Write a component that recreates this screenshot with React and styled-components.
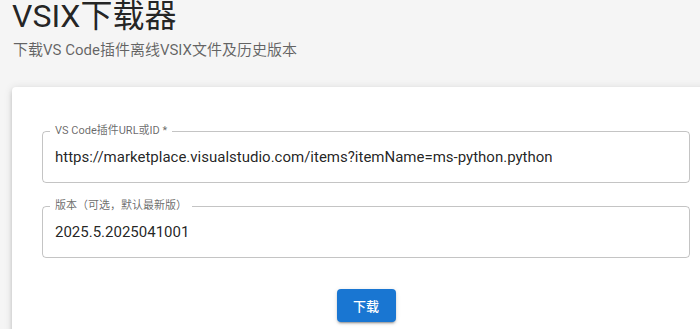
import React from 'react';
import styled, { createGlobalStyle } from 'styled-components';

const GlobalStyle = createGlobalStyle`
  html, body {
    margin: 0;
    padding: 0;
    background: #f5f5f5;
    overflow: hidden;
  }
  * {
    box-sizing: border-box;
  }
  body {
    font-family: Roboto, "Noto Sans CJK SC", sans-serif;
  }
`

const fields = [
    { label: 'VS Code插件URL或ID *', value: 'https://marketplace.visualstudio.com/items?itemName=ms-python.python' },
    { label: '版本（可选，默认最新版）', value: '2025.5.2025041001' },
]

function App() {
    return (
        <Page>
            <GlobalStyle />
            <Title>VSIX下载器</Title>
            <Subtitle>下载VS Code插件离线VSIX文件及历史版本</Subtitle>
            <Card>
                <Form>
                    {fields.map(f => (
                        <Field key={f.label}>
                            <Legend>{f.label}</Legend>
                            <Input defaultValue={f.value} />
                        </Field>
                    ))}
                </Form>
                <Actions>
                    <Button>下载</Button>
                </Actions>
            </Card>
        </Page>
    )
}

export default App

const Page = styled.div`
    width: 720px;
    padding: 0 0 0 12px;
`

const Title = styled.h1`
    margin: -3px 0 0 0;
    font-size: 32px;
    line-height: 38px;
    font-weight: 400;
    color: rgba(0, 0, 0, 0.87);
`

const Subtitle = styled.p`
    margin: 4px 0 0 1px;
    font-size: 15px;
    line-height: 22px;
    color: rgba(0, 0, 0, 0.6);
`

const Card = styled.div`
    margin-top: 26px;
    width: 708px;
    background: #fff;
    border-radius: 4px;
    box-shadow: 0 3px 3px -2px rgba(0,0,0,0.2), 0 3px 4px 0 rgba(0,0,0,0.14), 0 1px 8px 0 rgba(0,0,0,0.12);
    padding: 38px 30px 30px;
`

const Form = styled.div`
    display: flex;
    flex-direction: column;
    gap: 17px;
`

const Field = styled.fieldset`
    margin: 0;
    border: 1px solid rgba(0, 0, 0, 0.23);
    border-radius: 4px;
    padding: 0 7px 5px;
    min-width: 0;
`

const Legend = styled.legend`
    padding: 0 5px;
    font-size: 11px;
    line-height: 12px;
    color: rgba(0, 0, 0, 0.6);
`

const Input = styled.input`
    display: block;
    width: 100%;
    height: 40px;
    border: none;
    outline: none;
    background: transparent;
    padding: 0 5px;
    font-family: Roboto, "Noto Sans CJK SC", sans-serif;
    font-size: 15px;
    color: rgba(0, 0, 0, 0.87);
`

const Actions = styled.div`
    display: flex;
    justify-content: center;
    margin-top: 31px;
`

const Button = styled.button`
    width: 59px;
    height: 33px;
    border: none;
    border-radius: 4px;
    background: #1976d2;
    color: #fff;
    font-family: Roboto, "Noto Sans CJK SC", sans-serif;
    font-size: 13px;
    font-weight: 500;
    box-shadow: 0 3px 1px -2px rgba(0,0,0,0.2), 0 2px 2px 0 rgba(0,0,0,0.14), 0 1px 5px 0 rgba(0,0,0,0.12);
    cursor: pointer;
`
